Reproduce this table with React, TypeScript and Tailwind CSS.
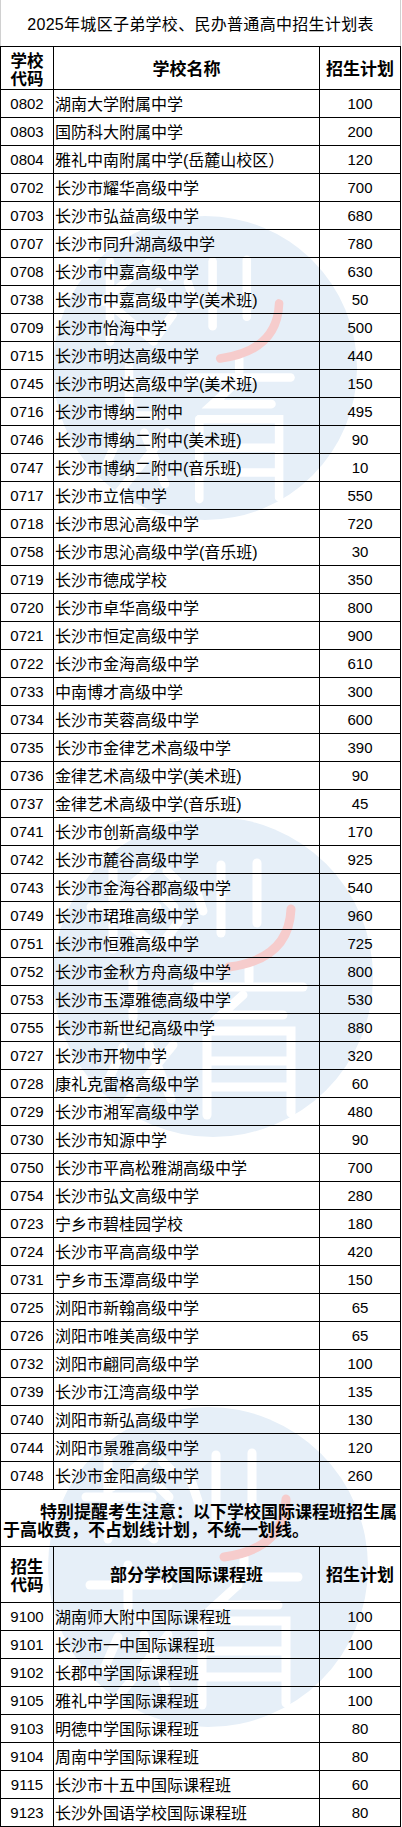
import React from 'react';

type Item = [string, string, string];

const mainRows: Item[] = [
  ['0802', '湖南大学附属中学', '100'],
  ['0803', '国防科大附属中学', '200'],
  ['0804', '雅礼中南附属中学(岳麓山校区）', '120'],
  ['0702', '长沙市耀华高级中学', '700'],
  ['0703', '长沙市弘益高级中学', '680'],
  ['0707', '长沙市同升湖高级中学', '780'],
  ['0708', '长沙市中嘉高级中学', '630'],
  ['0738', '长沙市中嘉高级中学(美术班)', '50'],
  ['0709', '长沙市怡海中学', '500'],
  ['0715', '长沙市明达高级中学', '440'],
  ['0745', '长沙市明达高级中学(美术班)', '150'],
  ['0716', '长沙市博纳二附中', '495'],
  ['0746', '长沙市博纳二附中(美术班)', '90'],
  ['0747', '长沙市博纳二附中(音乐班)', '10'],
  ['0717', '长沙市立信中学', '550'],
  ['0718', '长沙市思沁高级中学', '720'],
  ['0758', '长沙市思沁高级中学(音乐班)', '30'],
  ['0719', '长沙市德成学校', '350'],
  ['0720', '长沙市卓华高级中学', '800'],
  ['0721', '长沙市恒定高级中学', '900'],
  ['0722', '长沙市金海高级中学', '610'],
  ['0733', '中南博才高级中学', '300'],
  ['0734', '长沙市芙蓉高级中学', '600'],
  ['0735', '长沙市金律艺术高级中学', '390'],
  ['0736', '金律艺术高级中学(美术班)', '90'],
  ['0737', '金律艺术高级中学(音乐班)', '45'],
  ['0741', '长沙市创新高级中学', '170'],
  ['0742', '长沙市麓谷高级中学', '925'],
  ['0743', '长沙市金海谷郡高级中学', '540'],
  ['0749', '长沙市珺琟高级中学', '960'],
  ['0751', '长沙市恒雅高级中学', '725'],
  ['0752', '长沙市金秋方舟高级中学', '800'],
  ['0753', '长沙市玉潭雅德高级中学', '530'],
  ['0755', '长沙市新世纪高级中学', '880'],
  ['0727', '长沙市开物中学', '320'],
  ['0728', '康礼克雷格高级中学', '60'],
  ['0729', '长沙市湘军高级中学', '480'],
  ['0730', '长沙市知源中学', '90'],
  ['0750', '长沙市平高松雅湖高级中学', '700'],
  ['0754', '长沙市弘文高级中学', '280'],
  ['0723', '宁乡市碧桂园学校', '180'],
  ['0724', '长沙市平高高级中学', '420'],
  ['0731', '宁乡市玉潭高级中学', '150'],
  ['0725', '浏阳市新翰高级中学', '65'],
  ['0726', '浏阳市唯美高级中学', '65'],
  ['0732', '浏阳市翩同高级中学', '100'],
  ['0739', '长沙市江湾高级中学', '135'],
  ['0740', '浏阳市新弘高级中学', '130'],
  ['0744', '浏阳市景雅高级中学', '120'],
  ['0748', '长沙市金阳高级中学', '260'],
];

const intlRows: Item[] = [
  ['9100', '湖南师大附中国际课程班', '100'],
  ['9101', '长沙市一中国际课程班', '100'],
  ['9102', '长郡中学国际课程班', '100'],
  ['9105', '雅礼中学国际课程班', '100'],
  ['9103', '明德中学国际课程班', '80'],
  ['9104', '周南中学国际课程班', '80'],
  ['9115', '长沙市十五中国际课程班', '60'],
  ['9123', '长沙外国语学校国际课程班', '80'],
];

// faint round logo sitting behind the table
const Watermark: React.FC<{ className: string }> = ({ className }) => (
  <svg className={`pointer-events-none absolute ${className}`} viewBox="0 0 320 320">
    <circle cx="160" cy="160" r="160" fill="#e6eff8" />
    <g stroke="#ffffff" strokeWidth="9" strokeLinecap="round" fill="none">
      {/* 长 */}
      <path d="M60 48 V132" />
      <path d="M38 90 H104" />
      <path d="M64 80 L100 50" />
      <path d="M66 98 L106 132" />
      {/* 沙 */}
      <path d="M114 54 L124 64" />
      <path d="M111 80 L121 90" />
      <path d="M110 126 L126 104" />
      <path d="M168 48 V116" />
      <path d="M204 46 V106" />
      <path d="M142 70 L150 94" />
      {/* 教 */}
      <path d="M42 178 H120" />
      <path d="M80 158 V200" />
      <path d="M46 210 H116" />
      <path d="M70 230 L56 262" />
      <path d="M96 228 L118 282" />
      <path d="M120 228 L70 290" />
      {/* 育 */}
      <path d="M196 150 V164" />
      <path d="M144 170 H250" />
      <path d="M190 178 L168 198 H230" />
      <path d="M154 214 H238 V296" />
      <path d="M154 214 V298" />
      <path d="M158 244 H234" />
      <path d="M158 270 H234" />
    </g>
    <path d="M238 92 Q236 142 176 150" stroke="#f6cccc" strokeWidth="9" strokeLinecap="round" fill="none" />
  </svg>
);

const Row: React.FC<{ item: Item }> = ({ item }) => (
  <div className="flex h-[28px] border-b border-black">
    <div className="flex w-[53px] items-center justify-center border-l border-black pt-[2px] text-[15px]">{item[0]}</div>
    <div className="flex w-[266px] items-center whitespace-nowrap border-l border-black pl-[1px] pt-[2px] text-[16px]">{item[1]}</div>
    <div className="flex w-[82px] items-center justify-center border-x border-black pt-[2px] text-[15px]">{item[2]}</div>
  </div>
);

const HeadRow: React.FC<{ top: string[]; middle: string; className: string }> = ({ top, middle, className }) => (
  <div className={`flex border-b border-black font-bold ${className}`}>
    <div className="flex w-[53px] flex-col items-center justify-center border-l border-black pt-[3px] text-[16.5px] leading-[18px]">
      <span>{top[0]}</span>
      <span>{top[1]}</span>
    </div>
    <div className="flex w-[266px] items-center justify-center border-l border-black pt-[3px] text-[17px]">{middle}</div>
    <div className="flex w-[82px] items-center justify-center border-x border-black pt-[3px] text-[17px]">招生计划</div>
  </div>
);

export default function App() {
  return (
    <div className="relative h-[1827px] w-[402px] overflow-hidden bg-white font-['Liberation_Sans','Noto_Sans_CJK_SC',sans-serif] text-black">
      <Watermark className="left-[53px] top-[216px] h-[304px] w-[304px]" />
      <Watermark className="left-[53px] top-[817px] h-[320px] w-[320px]" />
      <Watermark className="left-[48px] top-[1407px] h-[320px] w-[320px]" />

      <div className="relative w-[401px]">
        <div className="flex h-[46px] items-center justify-center border-x border-[#d0d0d0] pt-[3px] text-[16px] tracking-[0.3px]">
          2025年城区子弟学校、民办普通高中招生计划表
        </div>
        <HeadRow top={['学校', '代码']} middle="学校名称" className="h-[44px] border-t" />
        {mainRows.map((r) => (
          <Row key={r[0]} item={r} />
        ))}

        <div className="flex h-[57px] flex-col justify-center border-x border-b border-black pl-[2px] pt-[8px] text-[17px] font-bold leading-[18px]">
          <span className="whitespace-nowrap pl-[37px]">特别提醒考生注意：以下学校国际课程班招生属</span>
          <span className="whitespace-nowrap">于高收费，不占划线计划，不统一划线。</span>
        </div>

        <HeadRow top={['招生', '代码']} middle="部分学校国际课程班" className="h-[56px]" />
        {intlRows.map((r) => (
          <Row key={r[0]} item={r} />
        ))}
      </div>
    </div>
  );
}
